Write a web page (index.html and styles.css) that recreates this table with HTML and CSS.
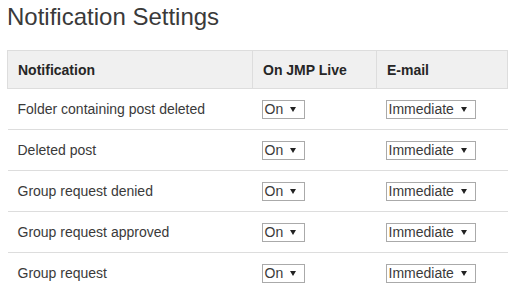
FILE: index.html
```html
<!DOCTYPE html>
<html>
  <head>
    <meta charset="UTF-8" />
    <meta name="viewport" content="width=device-width,initial-scale=1" />
    <title>Notification Settings</title>
    <link rel="stylesheet" href="styles.css">
  </head>
  <body>
    <div class="page">
      <h1>Notification Settings</h1>
      <table class="settings">
        <colgroup>
          <col class="col-name" />
          <col class="col-live" />
          <col class="col-mail" />
        </colgroup>
        <thead>
          <tr>
            <th>Notification</th>
            <th>On JMP Live</th>
            <th>E-mail</th>
          </tr>
        </thead>
        <tbody>
          <tr>
            <td>Folder containing post deleted</td>
            <td><span class="select">On<svg class="caret" viewBox="0 0 6 5"><path d="M0 0h6L3 5z" /></svg></span></td>
            <td><span class="select">Immediate<svg class="caret" viewBox="0 0 6 5"><path d="M0 0h6L3 5z" /></svg></span></td>
          </tr>
          <tr>
            <td>Deleted post</td>
            <td><span class="select">On<svg class="caret" viewBox="0 0 6 5"><path d="M0 0h6L3 5z" /></svg></span></td>
            <td><span class="select">Immediate<svg class="caret" viewBox="0 0 6 5"><path d="M0 0h6L3 5z" /></svg></span></td>
          </tr>
          <tr>
            <td>Group request denied</td>
            <td><span class="select">On<svg class="caret" viewBox="0 0 6 5"><path d="M0 0h6L3 5z" /></svg></span></td>
            <td><span class="select">Immediate<svg class="caret" viewBox="0 0 6 5"><path d="M0 0h6L3 5z" /></svg></span></td>
          </tr>
          <tr>
            <td>Group request approved</td>
            <td><span class="select">On<svg class="caret" viewBox="0 0 6 5"><path d="M0 0h6L3 5z" /></svg></span></td>
            <td><span class="select">Immediate<svg class="caret" viewBox="0 0 6 5"><path d="M0 0h6L3 5z" /></svg></span></td>
          </tr>
          <tr>
            <td>Group request</td>
            <td><span class="select">On<svg class="caret" viewBox="0 0 6 5"><path d="M0 0h6L3 5z" /></svg></span></td>
            <td><span class="select">Immediate<svg class="caret" viewBox="0 0 6 5"><path d="M0 0h6L3 5z" /></svg></span></td>
          </tr>
        </tbody>
      </table>
    </div>
  </body>
</html>
```

FILE: styles.css
```css
* {
  --text: #3a3a3a;
  --line: #ddd;
  --head: #f0f0f0;
  box-sizing: border-box;
}
body {
  margin: 0;
  padding: 0;
  font-family: "Liberation Sans", Arial, sans-serif;
  color: var(--text);
  background: #fff;
}
.page {
  padding: 3px 8px 0 7px;
}
h1 {
  margin: 0 0 20px 0;
  font-size: 24px;
  line-height: 27px;
  font-weight: normal;
  color: #3a3a3a;
}
.settings {
  border-collapse: collapse;
  table-layout: fixed;
  width: 500px;
  font-size: 14px;
}
.col-name {
  width: 245px;
}
.col-live {
  width: 124px;
}
.col-mail {
  width: 131px;
}
.settings th {
  text-align: left;
  font-weight: bold;
  background: var(--head);
  border: 1px solid var(--line);
  height: 38px;
  padding: 0 10px;
  color: #262626;
}
.settings td {
  height: 41px;
  padding: 0 10px;
  border-bottom: 1px solid var(--line);
}
.select {
  display: inline-flex;
  align-items: center;
  height: 19px;
  border: 1px solid #aaa;
  padding: 0 8px 0 2px;
  gap: 7px;
  line-height: 17px;
  color: #3a3a3a;
  vertical-align: middle;
  margin-left: -1px;
}
.caret {
  width: 6px;
  height: 5px;
  fill: #222;
}
```
